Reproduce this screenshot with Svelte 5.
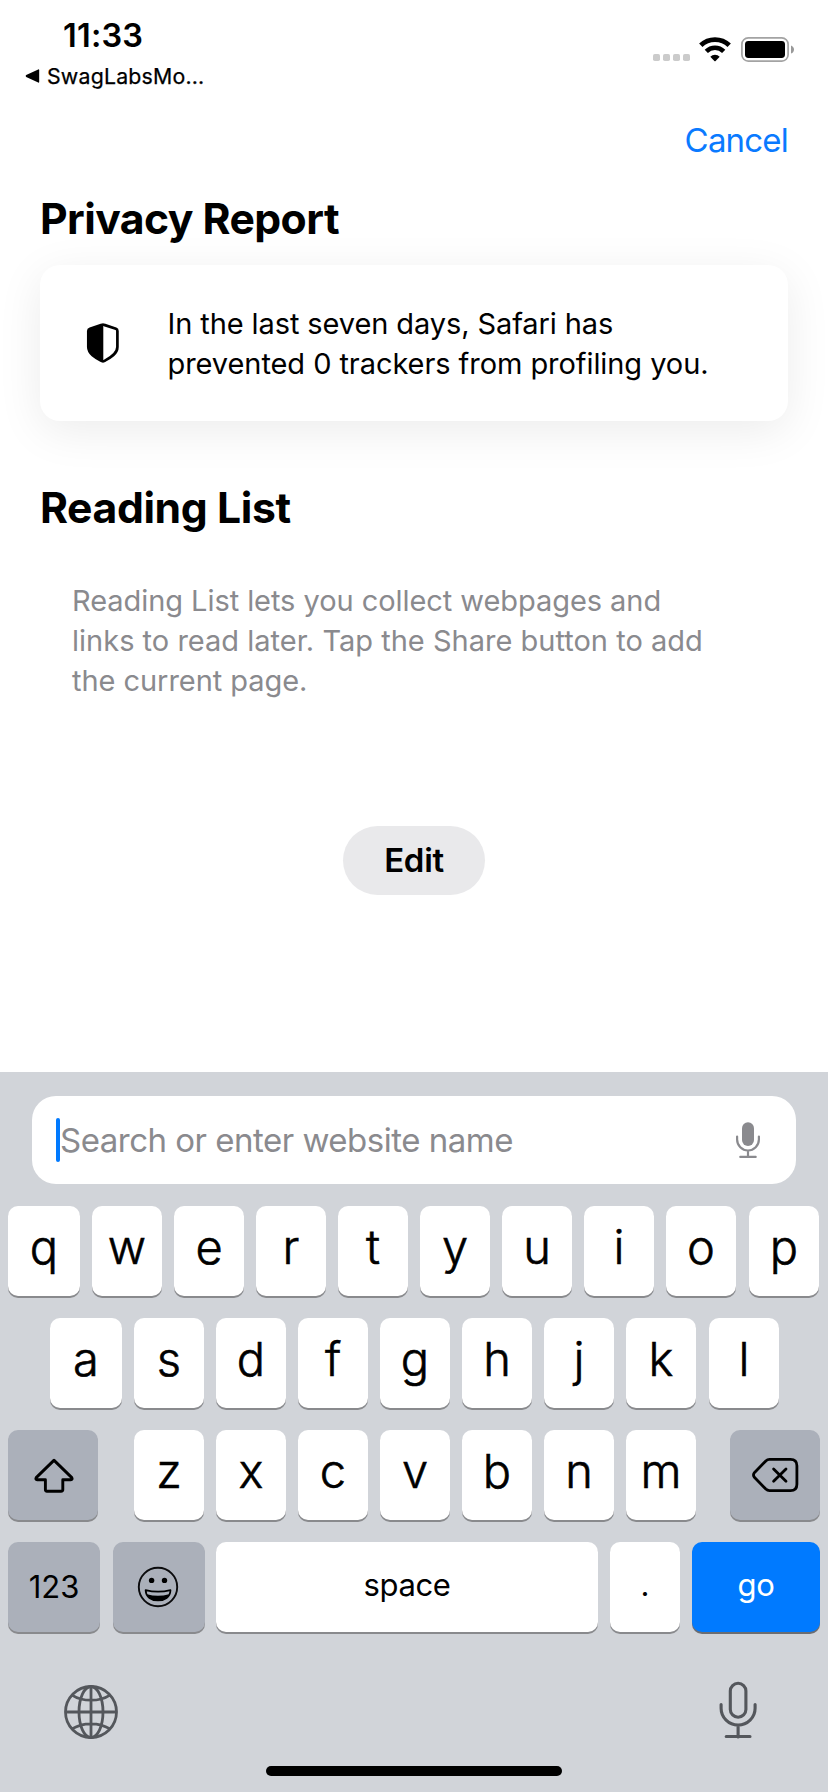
<script>
  const rows = [
    { name: 'top', keys: [...'qwertyuiop'] },
    { name: 'home', keys: [...'asdfghjkl'] },
    { name: 'lower', keys: [...'zxcvbnm'] }
  ];
</script>

<div class="screen">
  <header class="status">
    <div class="status-left">
      <div class="time">11:33</div>
      <div class="back">
        <svg width="15" height="14" viewBox="0 0 15 14"><path d="M13.2 .4 L1.2 6.1 Q0 7 1.2 7.9 L13.2 13.6 Q14.2 13.9 14.2 12.8 V1.2 Q14.2 .1 13.2 .4Z" /></svg>
        <span>SwagLabsMo...</span>
      </div>
    </div>
    <div class="status-icons">
      <svg class="dots" width="37" height="25" viewBox="0 0 37 25" fill="#cbcbcb">
        <rect x="0" y="17" width="7" height="7" rx="1.8" /><rect x="10" y="17" width="7" height="7" rx="1.8" />
        <rect x="20" y="17" width="7" height="7" rx="1.8" /><rect x="30" y="17" width="7" height="7" rx="1.8" />
      </svg>
      <svg class="wifi" width="32" height="25" viewBox="0 0 32 25">
        <path d="M1.8 8.3 A20.4 20.4 0 0 1 30.2 8.3" fill="none" stroke="#000" stroke-width="4.8" />
        <path d="M7.3 14.3 A12.4 12.4 0 0 1 24.7 14.3" fill="none" stroke="#000" stroke-width="4.6" />
        <path d="M11.3 19.7 A6.6 6.6 0 0 1 20.7 19.7 L16.6 23.9 Q16 24.5 15.4 23.9Z" />
      </svg>
      <svg class="battery" width="53" height="25" viewBox="0 0 53 25">
        <rect x=".9" y=".9" width="46.2" height="23.2" rx="6.3" fill="none" stroke="#a3a3a3" stroke-width="1.7" />
        <rect x="4" y="4" width="40" height="17" rx="3.4" />
        <path d="M50 8.4 Q53 9.6 53 12.5 Q53 15.4 50 16.6Z" fill="#999" />
      </svg>
    </div>
  </header>

  <main>
    <div class="toolbar"><span class="cancel">Cancel</span></div>

    <h1>Privacy Report</h1>
    <section class="card">
      <svg width="34" height="42" viewBox="0 0 34 42">
        <path d="M17 2.6 Q17.6 2.6 18.2 2.9 L29.9 6.8 Q31.4 7.4 31.4 9 V25 C31.4 32.6 22.5 36.6 18 39.1 Q17 39.6 16 39.1 C11.5 36.6 2.3 32.6 2.3 25 V9 Q2.3 7.4 4 6.8 L15.8 2.9 Q16.4 2.6 17 2.6Z" fill="none" stroke="#000" stroke-width="2.7" />
        <path d="M17.3 2 L3 7 L2 9 V25 C2 33 11 37 17.3 40Z" />
      </svg>
      <p><span class="line one">In the last seven days, Safari has</span><span class="line two">prevented 0 trackers from profiling you.</span></p>
    </section>

    <h1 class="reading">Reading List</h1>
    <p class="empty">
      <span class="line first">Reading List lets you collect webpages and</span>
      <span class="line second">links to read later. Tap the Share button to add</span>
      <span class="line third">the current page.</span>
    </p>

    <div class="edit-row"><div class="edit">Edit</div></div>
  </main>

  <footer class="keyboard">
    <div class="search">
      <i class="caret"></i>
      <span class="placeholder">Search or enter website name</span>
      <svg width="26" height="38" viewBox="0 0 26 38" fill="none" stroke="#8a8a8e" stroke-width="2.2" stroke-linecap="round">
        <rect x="7" y="1.3" width="12" height="23.7" rx="6" fill="#8a8a8e" stroke="none" />
        <path d="M2.1 15.6 V18.6 A10.9 10.9 0 0 0 23.9 18.6 V15.6 M13 29.5 V35.8 M5.3 35.9 H20.7" />
      </svg>
    </div>

    {#each rows as row}
      <div class="row {row.name}">
        {#if row.name === 'lower'}
          <div class="key dark side">
            <svg width="44" height="40" viewBox="0 0 44 40" fill="none" stroke="#000" stroke-width="2.9" stroke-linejoin="round">
              <path d="M23.1 5.4 Q23 5.3 22.9 5.4 L5.2 22.6 Q4.2 24.6 6.2 24.7 H14.4 V34.6 Q14.4 36.3 16 36.3 H30 Q31.8 36.3 31.8 34.6 V24.7 H39.8 Q41.8 24.6 40.8 22.6Z" />
            </svg>
          </div>
        {/if}
        {#each row.keys as letter}
          <div class="key letter">{letter}</div>
        {/each}
        {#if row.name === 'lower'}
          <div class="key dark side del">
            <svg width="50" height="40" viewBox="0 0 50 40" fill="none" stroke="#000" stroke-width="2.8" stroke-linejoin="round" stroke-linecap="round">
              <path d="M19.5 4.4 H40.5 Q46.9 4.4 46.9 10.8 V29.2 Q46.9 35.6 40.5 35.6 H19.5 Q17.4 35.6 15.8 34.1 L4.6 22.6 Q2.4 20 4.6 17.4 L15.8 5.9 Q17.4 4.4 19.5 4.4Z" />
              <path d="M23.6 13.9 L36 26.3 M36 13.9 L23.6 26.3" />
            </svg>
          </div>
        {/if}
      </div>
    {/each}

    <div class="row bottom">
      <div class="key dark num">123</div>
      <div class="key dark emoji">
        <svg width="42" height="42" viewBox="0 0 42 42">
          <circle cx="21" cy="21" r="19.2" fill="none" stroke="#0b0b0d" stroke-width="1.9" />
          <circle cx="14.6" cy="14.4" r="2.7" /><circle cx="27.5" cy="14.4" r="2.7" />
          <path d="M8.6 24.1 Q21 27.3 33.5 24.1 C33.2 31.2 27.6 34.5 21 34.5 C14.4 34.5 8.9 31.2 8.6 24.1Z" fill="none" stroke="#000" stroke-width="1.7" stroke-linejoin="round" />
          <path d="M10 28.2 Q21 31.2 32 28.2 C30 32.7 26 35 21 35 C16 35 12 32.7 10 28.2Z" />
        </svg>
      </div>
      <div class="key space">space</div>
      <div class="key dot">.</div>
      <div class="key go">go</div>
    </div>

    <div class="tools">
      <svg width="56" height="56" viewBox="0 0 56 56" fill="none" stroke="#54575c" stroke-width="2.8">
        <circle cx="28" cy="28" r="25.5" />
        <ellipse cx="28" cy="28" rx="12" ry="25.5" />
        <path d="M28 2.5 V53.5 M2.5 28 H53.5 M9.5 11.3 Q17 16.2 28 16.2 Q39 16.2 46.5 11.3 M9.5 44.7 Q17 39.8 28 39.8 Q39 39.8 46.5 44.7" />
      </svg>
      <svg width="40" height="60" viewBox="0 0 40 60" fill="none" stroke="#54575c" stroke-width="3.1" stroke-linecap="round">
        <rect x="12.3" y="3.3" width="15.6" height="33.9" rx="7.8" />
        <path d="M3.1 24.5 V28.3 A17 16.8 0 0 0 37.1 28.3 V24.5 M20.1 46 V57 M8.2 56.5 H32" />
      </svg>
    </div>
    <div class="indicator"></div>
  </footer>
</div>

<style>
  :global(body) { margin: 0; background: #fff; }
  .screen {
    width: 828px; height: 1792px; display: flex; flex-direction: column; overflow: hidden;
    background: #fff; color: #000; font-family: Inter, "Liberation Sans", sans-serif;
  }
  svg { display: block; flex: none; }
  h1, p { margin: 0; font-weight: 400; }

  .status { height: 120px; display: flex; justify-content: space-between; box-sizing: border-box; padding: 16px 34px 0 25px; }
  .time { padding-left: 38px; font-size: 32.5px; line-height: 40px; font-weight: 600; letter-spacing: 0.2px; }
  .back { display: flex; align-items: center; gap: 7px; font-size: 21.3px; line-height: 40px; letter-spacing: 0.2px; -webkit-text-stroke: 0.25px #000; }
  .status-icons { display: flex; padding-top: 21px; }
  .wifi { margin-left: 9px; }
  .battery { margin-left: 10px; }

  main { flex: 1; padding: 0 40px; }
  .toolbar { display: flex; justify-content: flex-end; height: 73px; }
  .cancel { color: #0a7aff; font-size: 33px; line-height: 40px; letter-spacing: -0.8px; }
  h1 { font-size: 42.7px; line-height: 52px; font-weight: 700; letter-spacing: -0.57px; }
  .card {
    margin-top: 20px; height: 156px; box-sizing: border-box; padding: 0 0 0 46px; display: flex; align-items: center;
    gap: 47.5px; background: #fff; border-radius: 20px; box-shadow: 0 10px 46px rgba(0, 0, 0, 0.08);
  }
  .card p { padding-top: 1px; }
  .line { display: block; white-space: nowrap; font-size: 29px; line-height: 40px; }
  .one { letter-spacing: -0.1px; }
  .two { letter-spacing: -0.07px; }
  .reading { margin-top: 61px; letter-spacing: -0.4px; }
  .empty { margin-top: 47px; padding-left: 32px; color: #8a8a8e; }
  .first { letter-spacing: -0.06px; }
  .second { letter-spacing: 0.01px; }
  .third { letter-spacing: -0.05px; }
  .edit-row { display: flex; justify-content: center; margin-top: 125px; }
  .edit {
    width: 142px; height: 69px; border-radius: 34.5px; background: #e9e9eb; text-align: center;
    font-size: 33px; line-height: 68px; font-weight: 600; letter-spacing: -0.3px;
  }

  .keyboard { height: 720px; box-sizing: border-box; padding-top: 24px; background: #d1d4d9; display: flex; flex-direction: column; }
  .search {
    height: 88px; margin: 0 32px 22px; box-sizing: border-box; padding: 0 35px 0 24px; display: flex; align-items: center;
    background: #fff; border-radius: 24px;
  }
  .caret { width: 4px; height: 44px; border-radius: 2px; background: #007aff; }
  .placeholder { flex: 1; color: #8a8a8e; font-size: 33px; line-height: 40px; letter-spacing: -0.5px; white-space: nowrap; }
  .row { display: flex; gap: 12px; height: 90px; margin-bottom: 22px; padding-left: 8px; }
  .key {
    width: 70px; height: 90px; flex: none; border-radius: 10px; background: #fff; box-shadow: 0 2px 0 #898a8d;
    display: flex; align-items: center; justify-content: center; box-sizing: border-box;
  }
  .letter { font-size: 47px; font-weight: 300; line-height: 82px; padding-bottom: 8px; -webkit-text-stroke: 0.6px #000; }
  .home { padding-left: 50px; }
  .top .key:first-child, .home .key:first-child { width: 72px; }
  .top .key:last-child, .home .key:last-child { margin-left: 1px; }
  .dark { background: #abb0ba; }
  .side { width: 90px; margin-right: 24px; }
  .del { margin: 0 0 0 22px; }
  .num { width: 92px; font-size: 31px; letter-spacing: -0.1px; padding-bottom: 2px; margin-right: 1px; }
  .emoji { width: 92px; margin-right: -1px; padding-right: 3px; }
  .space { width: 382px; font-size: 31px; letter-spacing: -0.4px; padding-bottom: 5px; }
  .dot { font-size: 31px; padding-bottom: 5px; }
  .go { width: 128px; font-size: 31px; letter-spacing: -0.2px; padding-bottom: 5px; background: #007aff; color: #fff; box-shadow: 0 2px 0 #6b6d72; }
  .tools { height: 112px; display: flex; justify-content: space-between; align-items: flex-start; padding: 26px 70px 0 63px; box-sizing: border-box; }
  .tools svg:first-child { margin-top: 4px; }
  .indicator { width: 296px; height: 10px; border-radius: 5px; background: #000; margin: 0 auto; }
</style>
